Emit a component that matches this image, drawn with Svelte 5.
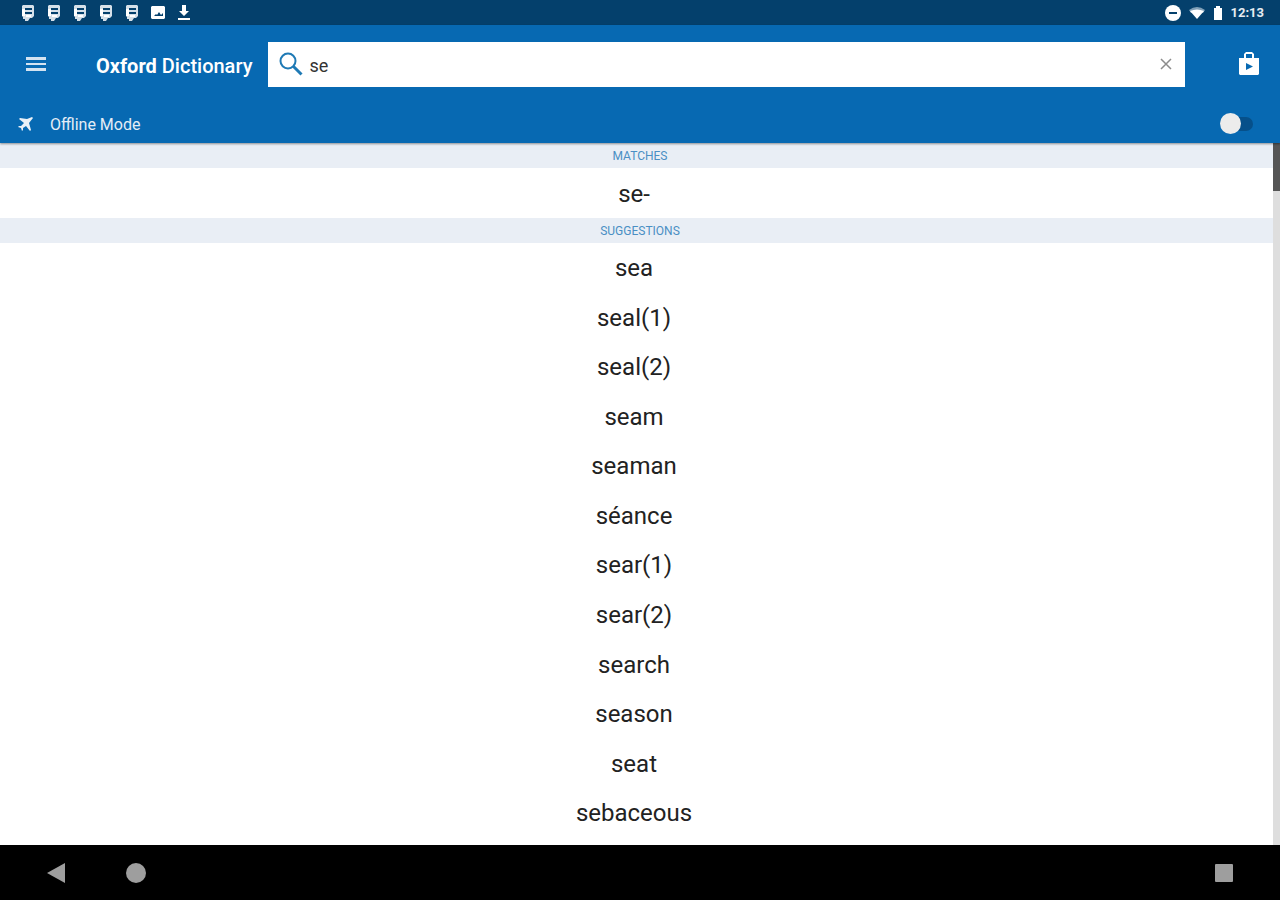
<script>
  let query = 'se';
  let offline = false;

  const notifications = [1, 2, 3, 4, 5];
  const matches = ['se-'];
  const suggestions = [
    'sea',
    'seal(1)',
    'seal(2)',
    'seam',
    'seaman',
    'séance',
    'sear(1)',
    'sear(2)',
    'search',
    'season',
    'seat',
    'sebaceous',
  ];

  const clearQuery = () => {
    query = '';
  };
</script>

<div class="screen">
  <div class="status-bar">
    <div class="notifications">
      {#each notifications as id (id)}
        <svg width="14" height="16" viewBox="0 0 14 16">
          <path fill="#d5e0e9" fill-rule="evenodd" d="M2 0h10l1 1v10l-2 2H9l-2 3H4v-2H2v-2l-1-1V1zM4 3v2h7V3zM4 7v2h7V7z" />
          <path fill="#fff" d="M1 4h3v7H1zM5 10h5v2H5z" />
        </svg>
      {/each}
      <svg width="14" height="16" viewBox="0 0 14 16">
        <path fill="#fff" fill-rule="evenodd" d="M1 1h12l1 1v11l-1 1H1l-1-1V2zM3 11h9V8l-2 2-2-3-2 3-1-1z" />
      </svg>
      <svg width="14" height="16" viewBox="0 0 14 16">
        <path fill="#fff" d="M5 0h4v6h3l-5 5-5-5h3zM1 13h12v2H1z" />
      </svg>
    </div>
    <div class="system">
      <svg width="16" height="16" viewBox="0 0 16 16">
        <circle cx="8" cy="8" r="8" fill="#fff" />
        <path fill="#04406c" d="M4 7h8v2H4z" />
      </svg>
      <svg width="16" height="16" viewBox="0 0 16 16">
        <path fill="#7f9fb7" d="M0 5q8-6 16 0l-2 3H2z" />
        <path fill="#fff" d="M1 6q7-3 14 0L8 14z" />
      </svg>
      <svg width="10" height="16" viewBox="0 0 10 16">
        <path fill="#fff" d="M3 1h4v2h2v12H1V3h2z" />
      </svg>
      <span class="clock">12:13</span>
    </div>
  </div>

  <header>
    <div class="toolbar">
      <button class="menu" aria-label="Menu">
        <svg width="20" height="16" viewBox="0 0 20 16">
          <path fill="#d3e3f1" d="M0 1h20v3H0zM0 7h20v2H0zM0 12h20v3H0z" />
        </svg>
      </button>
      <h1><b>Oxford</b> Dictionary</h1>
      <div class="search">
        <svg width="24" height="24" viewBox="0 0 24 24" fill="none" stroke="#1f7ab5">
          <circle cx="9" cy="9" r="7.5" stroke-width="2" />
          <path d="M14.5 14.5l8 8" stroke-width="3" />
        </svg>
        <input type="text" aria-label="Search" bind:value={query} />
        <button class="clear" aria-label="Clear search" on:click={clearQuery}>
          <svg width="12" height="12" viewBox="0 0 12 12">
            <path d="M1 1l10 10M11 1L1 11" stroke="#8c8c8c" stroke-width="1.5" />
          </svg>
        </button>
      </div>
      <button class="store" aria-label="Store">
        <svg width="20" height="24" viewBox="0 0 20 24">
          <path fill="#fff" fill-rule="evenodd" d="M0 6h5V2l2-2h6l2 2v4h5v16l-1 1H1l-1-1zM7 2v4h6V2zM7 11v7l7-3.500z" />
        </svg>
      </button>
    </div>

    <div class="offline">
      <svg width="16" height="16" viewBox="0 0 16 16">
        <path fill="#e9f0f7" d="M14 1l1 1-4 5 2 7-1 1-4-5-3 2v2l-1 1-1-3-3-1 1-1h2l3-3-5-4 1-1 7 1z" />
      </svg>
      <label for="offline-mode">Offline Mode</label>
      <input id="offline-mode" type="checkbox" role="switch" bind:checked={offline} />
    </div>
  </header>

  <main>
    <div class="results">
      <h2>MATCHES</h2>
      {#each matches as word}
        <button class="word">{word}</button>
      {/each}
      <h2>SUGGESTIONS</h2>
      {#each suggestions as word}
        <button class="word">{word}</button>
      {/each}
    </div>
    <div class="scrollbar"><div class="thumb"></div></div>
  </main>

  <nav>
    <button aria-label="Back">
      <svg width="20" height="20" viewBox="0 0 20 20">
        <path fill="#9e9e9e" d="M19 0v20L1 10z" />
      </svg>
    </button>
    <button aria-label="Home">
      <svg width="20" height="20" viewBox="0 0 20 20">
        <circle cx="10" cy="10" r="10" fill="#9e9e9e" />
      </svg>
    </button>
    <button class="recent" aria-label="Recent apps">
      <svg width="20" height="20" viewBox="0 0 20 20">
        <rect x="1" y="1" width="18" height="18" rx="1" fill="#9e9e9e" />
      </svg>
    </button>
  </nav>
</div>

<style>
  :global(body) {
    margin: 0;
  }

  .screen {
    display: flex;
    flex-direction: column;
    height: 100vh;
    background: #fff;
    font-family: Roboto, "Liberation Sans", sans-serif;
  }

  button {
    padding: 0;
    border: none;
    background: none;
    font: inherit;
    cursor: pointer;
  }

  svg {
    display: block;
    flex-shrink: 0;
  }

  .status-bar {
    display: flex;
    flex-shrink: 0;
    justify-content: space-between;
    align-items: center;
    height: 25px;
    padding: 0 16px 0 21px;
    background: #04406c;
  }

  .notifications {
    display: flex;
    gap: 12px;
  }

  .system {
    display: flex;
    align-items: center;
    gap: 8px;
  }

  .clock {
    color: #e6ecf2;
    font-size: 13px;
    font-weight: 700;
  }

  header {
    position: relative;
    z-index: 1;
    flex-shrink: 0;
    background: #0769b2;
    box-shadow: 0 1px 2px rgba(0, 0, 0, 0.4);
    color: #fff;
  }

  .toolbar {
    display: flex;
    align-items: center;
    height: 80px;
    padding: 0 21px 2px 26px;
    box-sizing: border-box;
  }

  .menu {
    margin-right: 50px;
  }

  h1 {
    margin: 0 16px 0 0;
    padding-top: 4px;
    font-size: 20px;
    font-weight: 500;
    white-space: nowrap;
  }

  h1 b {
    font-weight: 700;
  }

  .search {
    display: flex;
    flex: 1;
    align-items: center;
    height: 45px;
    padding: 0 13px 0 11px;
    box-sizing: border-box;
    background: #fff;
  }

  .search input {
    flex: 1;
    min-width: 0;
    padding: 2px 6px 0;
    border: none;
    outline: none;
    background: none;
    color: #333;
    font: inherit;
    font-size: 18px;
  }

  .store {
    margin-left: 54px;
  }

  .offline {
    display: flex;
    align-items: center;
    height: 38px;
    padding: 0 27px 0 18px;
  }

  .offline label {
    flex: 1;
    padding-left: 16px;
    color: #e4edf6;
    font-size: 16px;
  }

  .offline input {
    position: relative;
    width: 32px;
    height: 14px;
    margin: 0;
    border-radius: 7px;
    background: #06508a;
    appearance: none;
    cursor: pointer;
  }

  .offline input::before {
    content: "";
    position: absolute;
    top: -4px;
    left: -1px;
    width: 21px;
    height: 21px;
    border-radius: 50%;
    background: #ececec;
  }

  .offline input:checked::before {
    left: 12px;
  }

  main {
    position: relative;
    flex: 1;
    min-height: 0;
  }

  .results {
    display: flex;
    flex-direction: column;
    height: 100%;
    padding-bottom: 8px;
    box-sizing: border-box;
    overflow-y: auto;
    scrollbar-width: none;
  }

  h2 {
    flex-shrink: 0;
    margin: 0;
    padding-top: 2px;
    background: #e9eef5;
    color: #4a8fc4;
    font-size: 12px;
    font-weight: 400;
    line-height: 23px;
    text-align: center;
  }

  .word {
    flex: 1 0 48px;
    padding: 2px 12px 0 0;
    box-sizing: border-box;
    color: #222;
    font-size: 24px;
    text-align: center;
  }

  /* lies over the right edge of the list */
  .scrollbar {
    position: absolute;
    top: 0;
    right: 0;
    bottom: 0;
    width: 7px;
    background: #dedede;
  }

  .thumb {
    height: 48px;
    background: #555;
  }

  nav {
    display: flex;
    flex-shrink: 0;
    align-items: center;
    gap: 60px;
    height: 55px;
    padding: 0 46px;
    background: #000;
  }

  .recent {
    margin-left: auto;
  }
</style>
